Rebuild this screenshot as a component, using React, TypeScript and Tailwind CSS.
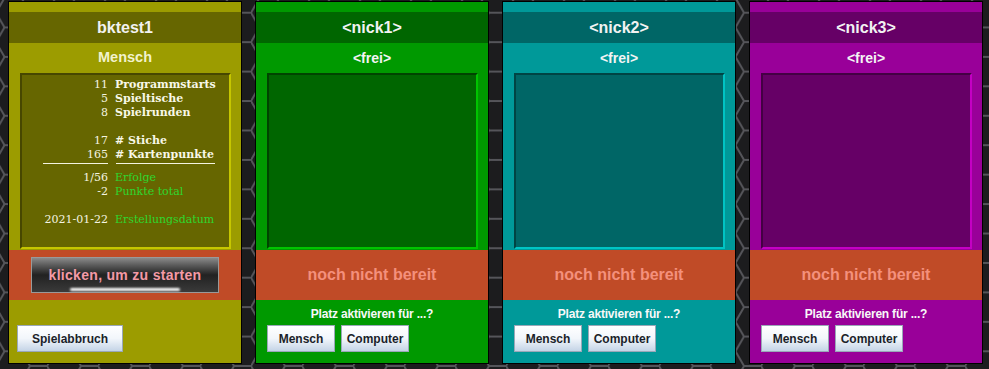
import React from "react";

const SANS = { fontFamily: '"Liberation Sans", Arial, sans-serif' };
const SERIF = { fontFamily: '"DejaVu Serif", "Liberation Serif", serif' };

function HexBg() {
  const s = 17;
  const h = 29.44;
  return (
    <svg className="absolute inset-0 h-full w-full" xmlns="http://www.w3.org/2000/svg">
      <defs>
        <pattern id="hex" width={3 * s} height={h} patternUnits="userSpaceOnUse" x="-4" y="-2">
          <rect width={3 * s} height={h} fill="#1c1c1e" />
          <path
            d={`M0,${h / 2} L${s / 2},0 L${(3 * s) / 2},0 L${2 * s},${h / 2} L${(3 * s) / 2},${h} L${s / 2},${h} Z M${2 * s},${h / 2} L${3 * s},${h / 2}`}
            fill="none"
            stroke="#55555a"
            strokeWidth="2"
          />
        </pattern>
      </defs>
      <rect width="100%" height="100%" fill="url(#hex)" />
    </svg>
  );
}

function LightButton({ label, w }: { label: string; w: string }) {
  return (
    <div
      className={`${w} flex h-[27px] items-center justify-center border border-[#9aa8b8] bg-gradient-to-b from-[#ffffff] via-[#f2f6fb] to-[#c4d4e6] text-[12px] font-bold text-[#1b1f2a]`}
      style={SANS}
    >
      {label}
    </div>
  );
}

function StatRow({ n, label, green }: { n: string; label: string; green?: boolean }) {
  return (
    <div className="flex h-[14px] items-center leading-[14px]">
      <div className="w-[86px] text-right text-[11px] text-[#f4f4e0]">{n}</div>
      <div
        className={`ml-[7px] whitespace-nowrap text-[11px] ${green ? "text-[#2fd62f]" : "font-bold text-[#f8f8e8]"}`}
      >
        {label}
      </div>
    </div>
  );
}

function Panel({ title, sub, theme, first }: { title: string; sub: string; theme: string; first?: boolean }) {
  const themes: Record<string, { bg: string; dark: string; box: string }> = {
    yellow: { bg: "bg-[#9c9c00]", dark: "bg-[#666600]", box: "border-t-[#474700] border-l-[#474700] border-b-[#c6c600] border-r-[#c6c600]" },
    green: { bg: "bg-[#009900]", dark: "bg-[#006600]", box: "border-t-[#004400] border-l-[#004400] border-b-[#00c400] border-r-[#00c400]" },
    teal: { bg: "bg-[#009999]", dark: "bg-[#006666]", box: "border-t-[#004444] border-l-[#004444] border-b-[#00c4c4] border-r-[#00c4c4]" },
    purple: { bg: "bg-[#990099]", dark: "bg-[#660066]", box: "border-t-[#440044] border-l-[#440044] border-b-[#c400c4] border-r-[#c400c4]" },
  };
  const t = themes[theme];
  return (
    <div className={`flex w-[234px] flex-col border border-black ${t.bg}`} style={SANS}>
      <div className="h-[10px]" />
      <div className={`flex h-[31px] items-center justify-center text-[16px] font-bold text-[#f2f2f2] ${t.dark}`}>
        {title}
      </div>
      <div
        className={`flex h-[30px] items-center justify-center font-bold ${first ? "text-[14.5px] text-[#f2f2cc]" : "text-[14px] text-[#f4f4f4]"}`}
      >
        {sub}
      </div>
      <div className={`ml-[11px] mr-[10px] h-[176px] border-2 ${t.box} ${t.dark}`}>
        {first && (
          <div className="pt-[3px]" style={SERIF}>
            <StatRow n="11" label="Programmstarts" />
            <StatRow n="5" label="Spieltische" />
            <StatRow n="8" label="Spielrunden" />
            <div className="h-[14px]" />
            <StatRow n="17" label="# Stiche" />
            <StatRow n="165" label="# Kartenpunkte" />
            <div className="mb-[7px] mt-[1px] flex h-[1px]">
              <div className="ml-[21px] w-[65px] bg-[#f4f4e0]" />
              <div className="ml-[8px] w-[99px] bg-[#f4f4e0]" />
            </div>
            <StatRow n="1/56" label="Erfolge" green />
            <StatRow n="-2" label="Punkte total" green />
            <div className="h-[14px]" />
            <StatRow n="2021-01-22" label="Erstellungsdatum" green />
          </div>
        )}
      </div>
      <div className="mt-[1px] flex h-[50px] items-center justify-center bg-[#c04b27]">
        {first ? (
          <div className="relative flex h-[36px] w-[188px] items-center justify-center overflow-hidden border border-[#9a9a9a] bg-gradient-to-b from-[#8a8a8a] via-[#222222] to-[#3a3a3a]">
            <div className="absolute bottom-[1px] left-1/2 h-[3px] w-[110px] -translate-x-1/2 rounded-full bg-[#ffffff] blur-[1px]" />
            <span className="relative text-[14px] font-bold tracking-[0.3px] text-[#f49aa6]">klicken, um zu starten</span>
          </div>
        ) : (
          <span className="text-[16px] font-bold text-[#f4907c]">noch nicht bereit</span>
        )}
      </div>
      <div className="h-[63px]">
        {first ? (
          <div className="pl-[8px] pt-[25px]">
            <LightButton label="Spielabbruch" w="w-[106px]" />
          </div>
        ) : (
          <div className="flex flex-col">
            <div className="flex h-[25px] items-center justify-center pt-[2px] text-[12px] font-bold tracking-[-0.2px] text-[#f8f8f8]">
              Platz aktivieren für ...?
            </div>
            <div className="flex gap-[6px] pl-[11px]">
              <LightButton label="Mensch" w="w-[68px]" />
              <LightButton label="Computer" w="w-[68px]" />
            </div>
          </div>
        )}
      </div>
    </div>
  );
}

export default function App() {
  return (
    <div className="relative h-[369px] w-[989px] overflow-hidden">
      <HexBg />
      <div className="relative flex gap-[13px] pl-[8px] pt-[1px]">
        <Panel title="bktest1" sub="Mensch" theme="yellow" first />
        <Panel title="<nick1>" sub="<frei>" theme="green" />
        <Panel title="<nick2>" sub="<frei>" theme="teal" />
        <Panel title="<nick3>" sub="<frei>" theme="purple" />
      </div>
    </div>
  );
}
